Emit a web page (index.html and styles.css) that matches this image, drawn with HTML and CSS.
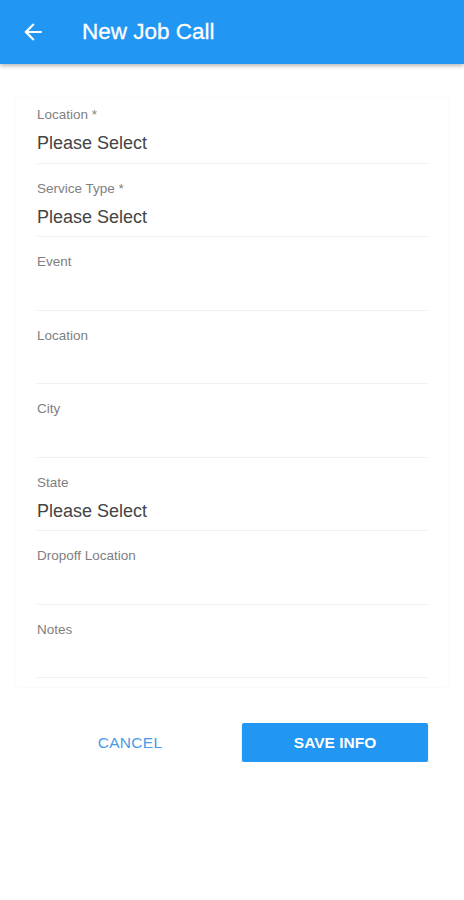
FILE: index.html
```html
<!DOCTYPE html>
<html>
<head>
<meta charset="utf-8">
<link rel="stylesheet" href="styles.css">
</head>
<body>
<header class="appbar">
  <svg class="back" viewBox="0 0 24 24" width="26" height="26"><path fill="#fff" d="M20 11H7.83l5.59-5.59L12 4l-8 8 8 8 1.41-1.41L7.83 13H20v-2z"/></svg>
  <h1 class="title">New Job Call</h1>
</header>
<main class="card">
  <div class="field first"><div class="label">Location *</div><div class="value">Please Select</div></div>
  <div class="field"><div class="label">Service Type *</div><div class="value">Please Select</div></div>
  <div class="field"><div class="label">Event</div><div class="value"></div></div>
  <div class="field"><div class="label">Location</div><div class="value"></div></div>
  <div class="field"><div class="label">City</div><div class="value"></div></div>
  <div class="field"><div class="label">State</div><div class="value">Please Select</div></div>
  <div class="field"><div class="label">Dropoff Location</div><div class="value"></div></div>
  <div class="field"><div class="label">Notes</div><div class="value"></div></div>
</main>
<div class="actions">
  <button class="btn cancel">CANCEL</button>
  <button class="btn save">SAVE INFO</button>
</div>
</body>
</html>
```
FILE: styles.css
```css
html, body {
  margin: 0;
  padding: 0;
  background: #fff;
  font-family: "Liberation Sans", Arial, sans-serif;
}
.appbar {
  height: 64px;
  background: #2196f3;
  display: flex;
  align-items: center;
  box-shadow: 0 2px 4px rgba(0,0,0,0.28);
  position: relative;
}
.back {
  margin-left: 20px;
  display: block;
}
.title {
  margin: 0 0 0 36px;
  color: #fff;
  font-size: 22.5px;
  font-weight: normal;
  line-height: 26px;
  -webkit-text-stroke: 0.3px #fff;
}
.card {
  display: block;
  margin: 34px 16px 0 16px;
  padding: 0 0 9px 0;
  box-shadow: 0 0 2px rgba(0,0,0,0.05);
}
.field {
  margin: 0 20px 0 21px;
  padding: 17px 0 6.5px 0;
  border-bottom: 1px solid #f0f0f0;
}
.field.first {
  padding-top: 9px;
}
.label {
  font-size: 13.5px;
  line-height: 16px;
  color: #808080;
}
.value {
  margin-top: 7px;
  height: 26px;
  line-height: 26px;
  font-size: 18px;
  color: #444;
}
.actions {
  display: grid;
  grid-template-columns: 1fr 1fr;
  column-gap: 19px;
  padding: 36px 36px 0 37px;
}
.btn {
  height: 39px;
  border: none;
  font-family: "Liberation Sans", Arial, sans-serif;
  font-size: 15.5px;
  background: transparent;
  padding: 0;
}
.cancel {
  color: #4a9ae6;
  letter-spacing: 0.3px;
}
.save {
  background: #2196f3;
  color: #fff;
  font-weight: bold;
  border-radius: 2px;
  box-shadow: 0 1px 2px rgba(0,0,0,0.2);
}
```
